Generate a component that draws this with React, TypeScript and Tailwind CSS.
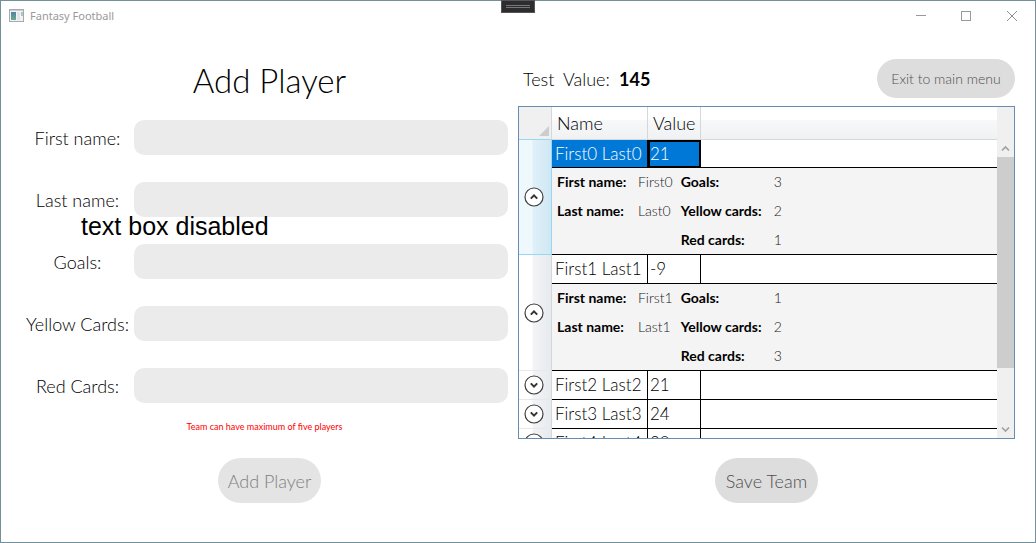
import React from "react";

type Player = {
  name: string;
  value: number;
  details?: { first: string; last: string; goals: number; yellow: number; red: number };
};

const players: Player[] = [
  { name: "First0 Last0", value: 21, details: { first: "First0", last: "Last0", goals: 3, yellow: 2, red: 1 } },
  { name: "First1 Last1", value: -9, details: { first: "First1", last: "Last1", goals: 1, yellow: 2, red: 3 } },
  { name: "First2 Last2", value: 21 },
  { name: "First3 Last3", value: 24 },
  { name: "First4 Last4", value: 20 },
];

const fields = [
  { id: "first-name", label: "First name:" },
  { id: "last-name", label: "Last name:" },
  { id: "goals", label: "Goals:" },
  { id: "yellow-cards", label: "Yellow Cards:" },
  { id: "red-cards", label: "Red Cards:" },
];

function AppIcon() {
  return (
    <svg width="15" height="13" viewBox="0 0 15 13" shapeRendering="crispEdges" aria-hidden="true">
      <defs>
        <linearGradient id="pane" x1="0" y1="0" x2="0" y2="1">
          <stop offset="0" stopColor="#4f83a5" />
          <stop offset="1" stopColor="#6aa98d" />
        </linearGradient>
      </defs>
      <rect x="0.5" y="0.5" width="14" height="12" fill="#f3f3f3" stroke="#a7a9ac" />
      <rect x="1" y="1" width="13" height="1" fill="#c9ccd0" />
      <rect x="2" y="3" width="5" height="8" fill="url(#pane)" />
      <rect x="8" y="3" width="3" height="8" fill="#e2e4ea" />
      <rect x="12" y="3" width="2" height="4" fill="#a5c8c4" />
    </svg>
  );
}

function TitleBar() {
  return (
    <header className="flex h-[29px] items-center justify-between pl-2 font-['Noto_Sans',sans-serif] font-normal text-[#999999]">
      <div className="flex items-center gap-[6px]">
        <AppIcon />
        <span className="text-[11px] leading-4">Fantasy Football</span>
      </div>
      <div className="flex h-full">
        <button type="button" aria-label="Minimize" className="flex w-[45px] items-center justify-center">
          <svg width="10" height="10" viewBox="0 0 10 10" shapeRendering="crispEdges">
            <path d="M0 4.5H10" stroke="#999999" />
          </svg>
        </button>
        <button type="button" aria-label="Maximize" className="flex w-[45px] items-center justify-center">
          <svg width="10" height="10" viewBox="0 0 10 10" shapeRendering="crispEdges">
            <rect x="0.5" y="0.5" width="9" height="9" fill="none" stroke="#999999" />
          </svg>
        </button>
        <button type="button" aria-label="Close" className="flex w-[47px] items-center justify-center">
          <svg width="10" height="10" viewBox="0 0 10 10">
            <path d="M0 0L10 10M10 0L0 10" stroke="#909090" />
          </svg>
        </button>
      </div>
    </header>
  );
}

function Chevron({ up }: { up: boolean }) {
  return (
    <svg width="20" height="20" viewBox="0 0 20 20" fill="none" aria-hidden="true">
      <circle cx="10" cy="10" r="9" fill="#ffffff" stroke="#3f3f3f" strokeWidth="1.2" />
      <path d={up ? "M6.8 11.6L10 8.4L13.2 11.6" : "M6.8 8.4L10 11.6L13.2 8.4"} stroke="#333333" strokeWidth="2" />
    </svg>
  );
}

function RowHeader({ player, selected }: { player: Player; selected: boolean }) {
  const tone = selected
    ? "border-[#98d7f1] bg-[linear-gradient(90deg,#eff9fd_0_13px,#dff0f8_14px,#d0e8f4)]"
    : "border-[#d5d8db] border-b-[#e8e8ea] bg-[linear-gradient(90deg,#ffffff_0_13px,#f2f4f6_14px,#e7eaee)]";
  return (
    <th scope="row" rowSpan={player.details ? 2 : 1} className={`border-r border-b p-0 align-middle ${tone}`}>
      <button
        type="button"
        aria-label={`${player.details ? "Collapse" : "Expand"} ${player.name}`}
        className="flex w-full justify-center pr-0.5"
      >
        <Chevron up={!!player.details} />
      </button>
    </th>
  );
}

function Details({ details }: { details: NonNullable<Player["details"]> }) {
  return (
    <dl className="grid w-max grid-cols-[73px_auto_85px_auto] gap-x-2 gap-y-px px-[5px] text-sm leading-7 text-[#202020] [&>dt]:font-bold [&>dt]:text-black">
      <dt>First name:</dt>
      <dd>{details.first}</dd>
      <dt>Goals:</dt>
      <dd>{details.goals}</dd>
      <dt>Last name:</dt>
      <dd>{details.last}</dd>
      <dt>Yellow cards:</dt>
      <dd>{details.yellow}</dd>
      <dt className="col-start-3">Red cards:</dt>
      <dd>{details.red}</dd>
    </dl>
  );
}

function PlayerRow({ player, selected }: { player: Player; selected: boolean }) {
  return (
    <>
      <tr className={selected ? "h-7 leading-[27px]" : "h-[29px] leading-7"}>
        <RowHeader player={player} selected={selected} />
        <td
          className={`border-r border-b border-black p-0 pl-[3px] whitespace-nowrap ${selected ? "bg-[#0078d7] text-white" : ""}`}
        >
          {player.name}
        </td>
        <td
          className={`border-r border-b border-black p-0 pl-0.5 ${selected ? "bg-[#0078d7] text-white outline-2 -outline-offset-2 outline-black" : ""}`}
        >
          {player.value}
        </td>
        <td className="border-b border-black p-0" />
      </tr>
      {player.details && (
        <tr className="h-[87px]">
          <td colSpan={3} className="border-b border-black bg-[#f4f4f4] p-0 align-top">
            <Details details={player.details} />
          </td>
        </tr>
      )}
    </>
  );
}

function ScrollBar() {
  return (
    <div className="flex w-[17px] shrink-0 flex-col bg-[#f0f0f0] pt-[33px]">
      <button type="button" aria-label="Scroll up" className="flex h-[17px] items-center justify-center">
        <svg width="9" height="7" viewBox="0 0 9 7" fill="none">
          <path d="M1 5.5L4.5 2L8 5.5" stroke="#a0a0a0" strokeWidth="1.6" />
        </svg>
      </button>
      <div className="flex-1">
        <div className="h-4/5 bg-[#cdcdcd]" />
      </div>
      <button type="button" aria-label="Scroll down" className="flex h-[17px] items-center justify-center">
        <svg width="9" height="7" viewBox="0 0 9 7" fill="none">
          <path d="M1 1.5L4.5 5L8 1.5" stroke="#a0a0a0" strokeWidth="1.6" />
        </svg>
      </button>
    </div>
  );
}

function TeamGrid() {
  return (
    <div className="mt-2 flex h-[333px] overflow-hidden border border-[#688caf]">
      <div className="min-w-0 flex-1 overflow-hidden">
        <table className="w-full table-fixed border-separate border-spacing-0 font-light">
          <colgroup>
            <col className="w-[33px]" />
            <col className="w-[96px]" />
            <col className="w-[53px]" />
            <col />
          </colgroup>
          <thead className="text-lg">
            <tr className="h-[33px] bg-[linear-gradient(#ffffff_0_13px,#f7f8fa_13px,#f0f1f3)] text-left leading-8">
              <td className="border-r border-b border-[#d5d8db] border-b-[#98d7f1] bg-[#f0f0f0] p-0 align-bottom">
                <svg width="10" height="10" viewBox="0 0 10 10" className="mr-[2px] mb-[3px] ml-auto" aria-hidden="true">
                  <path d="M10 0V10H0Z" fill="#cdcdcd" />
                </svg>
              </td>
              <th scope="col" className="border-r border-b border-[#d5d8db] p-0 pl-[5px] font-light">
                Name
              </th>
              <th scope="col" className="border-r border-b border-[#d5d8db] p-0 pl-[5px] font-light">
                Value
              </th>
              <td className="border-b border-[#d5d8db] p-0" />
            </tr>
          </thead>
          <tbody className="text-[17px]">
            {players.map((player, i) => (
              <PlayerRow key={player.name} player={player} selected={i === 0} />
            ))}
          </tbody>
        </table>
      </div>
      <ScrollBar />
    </div>
  );
}

function AddPlayerForm() {
  return (
    <form className="flex flex-col items-center">
      <h1 className="mt-[30px] text-[33px] leading-10 font-light">Add Player</h1>
      <div className="mt-5 flex w-full flex-col gap-[27px] pr-[10px]">
        {fields.map((field) => (
          <div key={field.id} className="grid grid-cols-[113px_1fr] items-center">
            <label htmlFor={field.id} className="text-center text-lg leading-7 whitespace-nowrap">
              {field.label}
            </label>
            <input id={field.id} disabled className="h-[35px] w-full rounded-[10px] bg-[#ebebeb] px-2 text-lg" />
          </div>
        ))}
      </div>
      <p className="mt-4 pr-[10px] text-[9px] leading-4 font-normal text-[#ff0000]">Team can have maximum of five players</p>
      <button type="submit" disabled className="mt-[23px] h-[45px] w-[103px] rounded-full bg-[#e4e4e4] text-lg text-[#808080]">
        Add Player
      </button>
    </form>
  );
}

function TeamPanel() {
  return (
    <section className="flex flex-col pt-[29px]">
      <div className="flex items-center justify-between pl-[5px]">
        <p className="flex text-lg leading-7">
          <span className="w-10">Test</span>
          <span className="w-14">Value:</span>
          <b className="font-bold">145</b>
        </p>
        <button type="button" className="h-[39px] w-[138px] rounded-full bg-[#dddddd] text-sm text-[#505050]">
          Exit to main menu
        </button>
      </div>
      <TeamGrid />
      <button type="button" className="mt-[19px] h-[45px] w-[103px] self-center rounded-full bg-[#dddddd] text-lg text-[#505050]">
        Save Team
      </button>
    </section>
  );
}

export default function App() {
  return (
    <div className="relative min-h-screen border border-[#73909a] bg-white font-['Lato',sans-serif] font-light text-black">
      <TitleBar />
      <main className="grid grid-cols-2 px-5">
        <AddPlayerForm />
        <TeamPanel />
      </main>
      <div className="absolute -top-px left-1/2 flex h-[13px] w-[34px] -translate-x-1/2 flex-col items-center justify-center gap-px border border-[#555558] bg-[#2d2d30]">
        <span className="h-px w-6 bg-[#77777a]" />
        <span className="h-px w-6 bg-[#77777a]" />
      </div>
      <p className="absolute top-[210px] left-20 font-['Liberation_Sans',sans-serif] text-[25px] leading-[30px] font-normal">
        text box disabled
      </p>
    </div>
  );
}
